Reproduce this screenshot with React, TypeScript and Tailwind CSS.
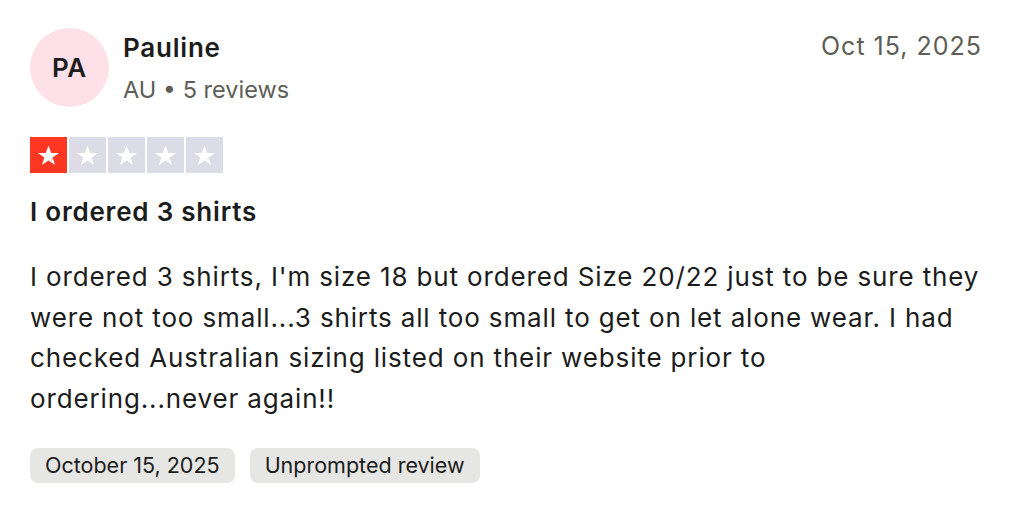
import React from "react"

function Star({ filled }: { filled: boolean }) {
  const bg = filled ? "#ff3722" : "#dcdce6"
  return (
    <div className={filled ? "flex h-[36px] w-[37px] items-center justify-center bg-[#ff3722]" : "flex h-[36px] w-[37px] items-center justify-center bg-[#dcdce6]"}>
      <svg viewBox="0 0 24 24" className="h-[25px] w-[25px]">
        <path d="M12 2.5l2.6 7.1h7.5l-6.1 4.4 2.3 7.2L12 16.8l-6.3 4.4 2.3-7.2-6.1-4.4h7.5z" fill="#ffffff" />
        <path d="M14.6 17.2l1.4 -3.1" stroke={bg} strokeWidth="0.9" strokeOpacity="0.55" />
      </svg>
    </div>
  )
}

export default function App() {
  return (
    <div className="min-h-[518px] w-[1028px] bg-white px-[30px] pt-[28px] text-[#1c1c1c]" style={{ fontFamily: "Inter, 'Liberation Sans', sans-serif" }}>
      <div className="flex items-start justify-between">
        <div className="flex items-start gap-[14px]">
          <div className="flex h-[79px] w-[79px] items-center justify-center rounded-full bg-[#fde0e8] text-[26px] font-semibold tracking-[0.03em]">
            PA
          </div>
          <div className="flex flex-col pt-[3px]">
            <span className="text-[26px] font-semibold leading-[34px] tracking-[0.03em]">Pauline</span>
            <span className="mt-[8px] text-[23.5px] leading-[34px] text-[#5e5d57]">AU • 5 reviews</span>
          </div>
        </div>
        <span className="pr-[16px] pt-[1px] text-[25px] leading-[34px] tracking-[0.04em] text-[#5e5d57]">Oct 15, 2025</span>
      </div>

      <div className="mt-[30px] flex gap-[2px]">
        <Star filled />
        <Star filled={false} />
        <Star filled={false} />
        <Star filled={false} />
        <Star filled={false} />
      </div>

      <h2 className="mt-[21px] text-[26px] font-semibold leading-[36px] tracking-[0.03em]">I ordered 3 shirts</h2>

      <p className="mt-[27px] max-w-[951px] text-[26px] leading-[40.5px] tracking-[0.033em]">
        I ordered 3 shirts, I'm size 18 but ordered Size 20/22 just to be sure they were not too small...3 shirts all too small to get on let alone wear. I had checked Australian sizing listed on their website prior to ordering...never again!!
      </p>

      <div className="mt-[29px] flex gap-[15px]">
        <span className="rounded-[8px] bg-[#e6e6e4] px-[15px] py-[4px] text-[21.5px] leading-[27px]">October 15, 2025</span>
        <span className="rounded-[8px] bg-[#e6e6e4] px-[15px] py-[4px] text-[21.5px] leading-[27px]">Unprompted review</span>
      </div>
    </div>
  )
}
